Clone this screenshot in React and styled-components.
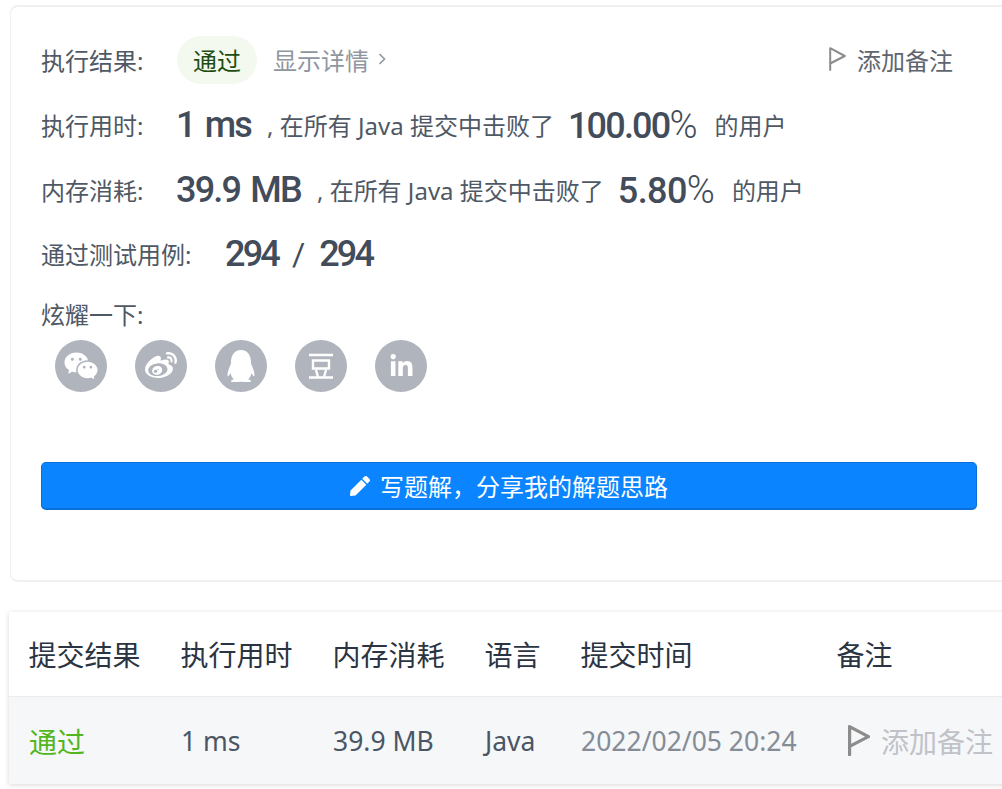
import React from "react";
import styled, { createGlobalStyle } from "styled-components";
import { FaWeibo, FaQq, FaLinkedinIn, FaPen } from "react-icons/fa";
import { RiWechatFill } from "react-icons/ri";

const GlobalStyle = createGlobalStyle`
  html, body {
    margin: 0;
    padding: 0;
    background: #fff;
    overflow: hidden;
  }
  body {
    font-family: "Noto Sans", "Noto Sans CJK SC", sans-serif;
  }
`;

const FlagIcon = ({ width = 17, height = 24, weight = 2 }) => (
  <svg width={width} height={height} viewBox="0 0 17 24" fill="none">
    <path
      d="M1.2 23V1.2L15.8 9 1.2 16.5"
      stroke="#8c8c8c"
      strokeWidth={weight}
      strokeLinejoin="round"
      strokeLinecap="round"
    />
  </svg>
);

const Chevron = () => (
  <svg width="8" height="12" viewBox="0 0 8 12" fill="none">
    <path d="M1.5 1l5 5-5 5" stroke="#8f96a0" strokeWidth="1.6" />
  </svg>
);

const DoubanIcon = () => (
  <svg width="28" height="28" viewBox="0 0 28 28" fill="none" stroke="#fff" strokeWidth="2.4">
    <path d="M2 3h24M2 25.5h24M6 8.5h16v8H6zM9 18l2 7M19 18l-2 7" />
  </svg>
);

const columns = "152px 152px 152px 96px 256px 1fr";

function App() {
  return (
    <Page>
      <GlobalStyle />
      <Card>
        <ResultRow>
          <Label>执行结果:</Label>
          <PassPill>通过</PassPill>
          <DetailLink>
            显示详情
            <Chevron />
          </DetailLink>
          <AddNote>
            <FlagIcon />
            添加备注
          </AddNote>
        </ResultRow>
        <StatRow $height={66} $first>
          <Label>执行用时:</Label>
          <BigValue>1 ms</BigValue>
          <Detail>, 在所有 Java 提交中击败了</Detail>
          <BigValue $percent>100.00<Percent>%</Percent></BigValue>
          <Detail>的用户</Detail>
        </StatRow>
        <StatRow $height={64}>
          <Label>内存消耗:</Label>
          <BigValue>39.9 MB</BigValue>
          <Detail>, 在所有 Java 提交中击败了</Detail>
          <BigValue $percent $loose>5.80<Percent>%</Percent></BigValue>
          <Detail>的用户</Detail>
        </StatRow>
        <StatRow $height={64}>
          <CaseLabel>通过测试用例:</CaseLabel>
          <BigValue $tight>294</BigValue>
          <Slash>/</Slash>
          <BigValue $tight>294</BigValue>
        </StatRow>
        <ShareLabel>炫耀一下:</ShareLabel>
        <SocialRow>
          <SocialIcon><RiWechatFill size={36} /></SocialIcon>
          <SocialIcon><FaWeibo size={32} /></SocialIcon>
          <SocialIcon><FaQq size={32} /></SocialIcon>
          <SocialIcon><DoubanIcon /></SocialIcon>
          <SocialIcon><FaLinkedinIn size={25} /></SocialIcon>
        </SocialRow>
        <WriteButton>
          <FaPen size={20} />
          写题解，分享我的解题思路
        </WriteButton>
      </Card>
      <Table>
        <HeadRow>
          <span>提交结果</span>
          <span>执行用时</span>
          <span>内存消耗</span>
          <span>语言</span>
          <span>提交时间</span>
          <span>备注</span>
        </HeadRow>
        <BodyRow>
          <PassText>通过</PassText>
          <span>1 ms</span>
          <span>39.9 MB</span>
          <span>Java</span>
          <DateText>2022/02/05 20:24</DateText>
          <NoteCell>
            <FlagIcon width={22} height={31} weight={2.5} />
            添加备注
          </NoteCell>
        </BodyRow>
      </Table>
    </Page>
  );
}

const Page = styled.div`
  width: 1002px;
  height: 789px;
  overflow: hidden;
  padding: 5px 0 0 9px;
  box-sizing: border-box;
`;

const Card = styled.div`
  width: 1000px;
  height: 577px;
  margin-left: 1px;
  box-sizing: border-box;
  padding: 29px 0 0 30px;
  background: #fff;
  border: 1px solid #f0f0f0;
  border-bottom-width: 2px;
  border-top-width: 2px;
  border-radius: 8px;
  color: #4b5563;
`;

const ResultRow = styled.div`
  display: flex;
  align-items: center;
  width: 912px;
  height: 48px;
`;

const Label = styled.span`
  flex: 0 0 135px;
  padding-bottom: 2px;
  font-size: 24px;
  color: #4f5865;
`;

const CaseLabel = styled(Label)`
  flex-basis: 184px;
`;

const PassPill = styled.span`
  width: 80px;
  height: 46px;
  margin-left: 1px;
  padding-bottom: 2px;
  border-radius: 24px;
  background: #f4f9ef;
  color: #1e4d12;
  font-size: 24px;
  display: flex;
  align-items: center;
  justify-content: center;
`;

const DetailLink = styled.span`
  margin-left: 16px;
  padding-bottom: 2px;
  display: flex;
  align-items: center;
  gap: 9px;
  font-size: 24px;
  color: #8f96a0;
`;

const AddNote = styled.span`
  margin-left: auto;
  padding-bottom: 2px;
  display: flex;
  align-items: center;
  gap: 11px;
  font-size: 24px;
  color: #5f6670;
`;

const StatRow = styled.div`
  display: flex;
  align-items: center;
  height: ${(p) => p.$height}px;
  margin-top: ${(p) => (p.$first ? "8px" : "0")};
`;

const BigValue = styled.span`
  font-family: "Roboto", "Noto Sans", sans-serif;
  font-size: 36px;
  font-weight: 500;
  letter-spacing: ${(p) => (p.$tight ? "-2.8px" : p.$loose ? "-0.6px" : "-1.8px")};
  word-spacing: 3px;
  color: #434c5a;
  margin-right: ${(p) => (p.$percent ? "17px" : p.$tight ? "14px" : "16px")};
`;

const Percent = styled.span`
  font-size: 38px;
  font-weight: 300;
  letter-spacing: 0;
`;

const Slash = styled.span`
  font-family: "Roboto", "Noto Sans", sans-serif;
  font-size: 32px;
  font-weight: 400;
  color: #434c5a;
  margin-right: 14px;
`;

const Detail = styled.span`
  padding-bottom: 2px;
  font-size: 24px;
  color: #4f5865;
  margin-right: 14px;
`;

const ShareLabel = styled.div`
  font-size: 24px;
  line-height: 36px;
  margin-top: 11px;
  color: #4f5865;
`;

const SocialRow = styled.div`
  display: flex;
  gap: 28px;
  margin: 7px 0 0 14px;
`;

const SocialIcon = styled.span`
  width: 52px;
  height: 52px;
  border-radius: 50%;
  background: #b0b4bc;
  color: #fff;
  display: flex;
  align-items: center;
  justify-content: center;
`;

const WriteButton = styled.button`
  display: flex;
  align-items: center;
  justify-content: center;
  gap: 10px;
  width: 936px;
  height: 48px;
  margin-top: 70px;
  padding: 0;
  border: 1px solid #0a6fd6;
  border-bottom-width: 2px;
  border-radius: 5px;
  background: #0a84ff;
  color: #fff;
  font-family: inherit;
  font-size: 24px;
`;

const Table = styled.div`
  width: 1010px;
  margin-top: 30px;
  box-shadow: 0 1px 5px rgba(0, 0, 0, 0.16);
`;

const HeadRow = styled.div`
  display: grid;
  grid-template-columns: ${columns};
  align-items: center;
  height: 84px;
  padding-left: 19.5px;
  background: #fff;
  border-bottom: 1px solid #ececec;
  font-size: 28px;
  color: #2b3442;
`;

const BodyRow = styled.div`
  display: grid;
  grid-template-columns: ${columns};
  align-items: center;
  height: 87px;
  padding-left: 20px;
  background: #f6f7f9;
  font-size: 26.5px;
  color: #4b5563;
`;

const PassText = styled.span`
  font-size: 28px;
  color: #52b61e;
`;

const DateText = styled.span`
  color: #858c96;
`;

const NoteCell = styled.span`
  display: flex;
  align-items: center;
  gap: 11px;
  margin-left: 11px;
  font-size: 28px;
  color: #c0c2c8;
`;

export default App;
